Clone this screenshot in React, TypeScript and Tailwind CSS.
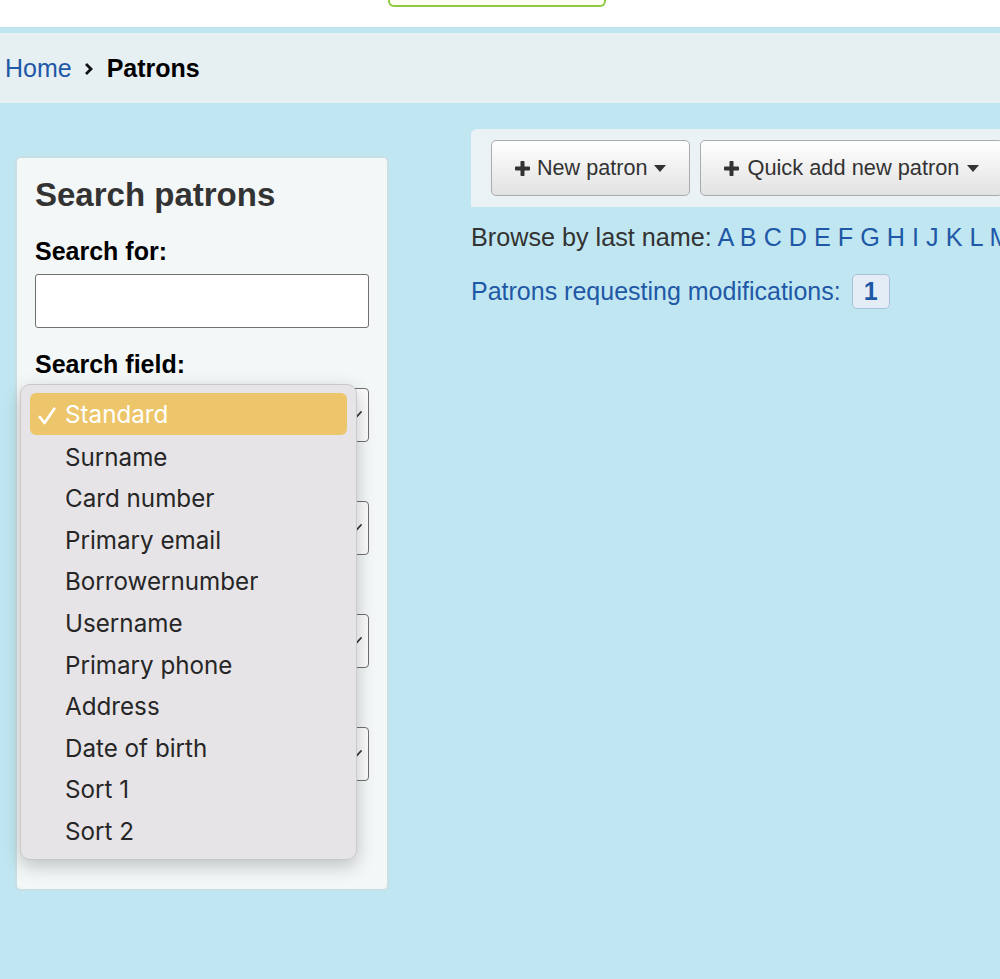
import { FC } from 'react';

const sans = { fontFamily: '"Liberation Sans", Arial, sans-serif' };
const menuFont = { fontFamily: 'Inter, "Noto Sans", sans-serif' };

const letters = 'ABCDEFGHIJKLMNOPQRSTUVWXYZ'.split('');

const options = [
  'Standard',
  'Surname',
  'Card number',
  'Primary email',
  'Borrowernumber',
  'Username',
  'Primary phone',
  'Address',
  'Date of birth',
  'Sort 1',
  'Sort 2',
];

const fields = [
  { label: 'Search field:', value: 'Standard' },
  { label: 'Search type:', value: 'Starts with' },
  { label: 'Patron category:', value: 'Any' },
  { label: 'Library:', value: 'Any' },
];

const Plus: FC = () => (
  <svg width="15" height="15" viewBox="0 0 15 15" className="shrink-0">
    <rect x="5.5" y="0" width="4" height="15" rx="0.8" fill="#333" />
    <rect x="0" y="5.5" width="15" height="4" rx="0.8" fill="#333" />
  </svg>
);

const Caret: FC = () => (
  <svg width="12" height="7" viewBox="0 0 12 7" className="shrink-0">
    <path d="M0 0 L12 0 L6 7 Z" fill="#333" />
  </svg>
);

const Check: FC = () => (
  <svg width="18" height="18" viewBox="0 0 18 18">
    <path d="M1.8 10 L6.5 16 L16.3 1.8" fill="none" stroke="#fff" strokeWidth="2.8" strokeLinecap="round" strokeLinejoin="round" />
  </svg>
);

const SelectBox: FC<{ value: string }> = ({ value }) => (
  <div className="flex h-[54px] items-center justify-between rounded-[4px] border-[1.5px] border-[#707070] bg-[#fbfbfb] pl-3 pr-[6px] text-[22px] text-[#222]">
    <span>{value}</span>
    <svg width="12" height="8" viewBox="0 0 12 8">
      <path d="M1 1 L6 6.5 L11 1" fill="none" stroke="#333" strokeWidth="1.8" strokeLinecap="round" />
    </svg>
  </div>
);

const Dropdown: FC = () => (
  <div
    className="absolute left-[3px] top-[226px] w-[337px] rounded-[10px] border border-[#c9c8cb] bg-[#e6e4e7] px-[9px] pb-[8px] pt-[8px] shadow-[0_6px_18px_rgba(0,0,0,0.22)]"
    style={menuFont}
  >
    {options.map((o, i) => (
      <div
        key={o}
        className={
          i === 0
            ? 'flex h-[42px] items-center rounded-[6px] bg-[#edc56a] pt-[3px] text-[24.2px] text-white'
            : 'flex h-[41.6px] items-center pt-[4px] text-[24.2px] text-[#262626]'
        }
      >
        <span className="flex w-[35px] justify-start pl-[8px]">{i === 0 ? <Check /> : null}</span>
        <span>{o}</span>
      </div>
    ))}
  </div>
);

export default function App() {
  return (
    <div className="min-h-screen overflow-hidden bg-[#c0e7f1]" style={sans}>
      <div className="h-[27px] bg-white">
        <div className="ml-[388px] h-[7px] w-[218px] rounded-b-[6px] border-2 border-t-0 border-[#8fca45] bg-[#fffff2]" />
      </div>
      <div className="mt-[6px] flex h-[70px] items-center bg-[#e6eff2] pl-[5px] pt-[2px] text-[25px]">
        <a className="text-[#1f58a6]">Home</a>
        <svg width="10" height="14" viewBox="0 0 10 14" className="ml-[12px] mr-[13px]">
          <path d="M2 2 L7 7 L2 12" fill="none" stroke="#111" strokeWidth="2.8" />
        </svg>
        <span className="font-bold text-black">Patrons</span>
      </div>

      <div className="flex items-start pl-[15px]">
        <div className="relative mt-[53px] w-[374px] shrink-0 rounded-[6px] border-2 border-[#c8e0e5] bg-[#f3f7f8] px-[18px] pb-[108px] pt-[17px]">
          <h3 className="text-[33px] font-bold leading-[40px] text-[#333]">Search patrons</h3>
          <label className="mb-[8px] mt-[21px] block text-[25px] font-bold leading-[30px] text-black">Search for:</label>
          <div className="h-[54px] rounded-[3px] border-[1.5px] border-[#707070] bg-white" />
          {fields.map((f, i) => (
            <div key={f.label}>
              <label
                className={
                  i === 0
                    ? 'mb-[9px] mt-[21px] block text-[25px] font-bold leading-[30px] text-black'
                    : 'mb-[9px] mt-[20px] block text-[25px] font-bold leading-[30px] text-black'
                }
              >
                {f.label}
              </label>
              <SelectBox value={f.value} />
            </div>
          ))}
          <Dropdown />
        </div>

        <div className="ml-[82px] mt-[26px] w-[800px] shrink-0">
          <div className="flex gap-[10px] rounded-tl-[6px] bg-[#eaf2f5] px-[20px] py-[11px]">
            <button className="flex h-[56px] items-center gap-[7px] rounded-[5px] border border-[#acacac] bg-gradient-to-b from-white to-[#e2e2e2] px-[23px] text-[21.6px] text-[#333]">
              <Plus />
              <span>New patron</span>
              <Caret />
            </button>
            <button className="flex h-[56px] items-center gap-[8px] rounded-[5px] border border-[#acacac] bg-gradient-to-b from-white to-[#e2e2e2] px-[23px] text-[21.8px] text-[#333]">
              <Plus />
              <span>Quick add new patron</span>
              <Caret />
            </button>
          </div>
          <p className="mt-[15px] whitespace-nowrap text-[25.2px] leading-[30px] text-[#333]">
            Browse by last name:{' '}
            {letters.map((l) => (
              <span key={l}>
                <a className="text-[#1f58a6]">{l}</a>{' '}
              </span>
            ))}
          </p>
          <div className="mt-[21px] flex items-center gap-[11px] text-[25px] text-[#1f58a6]">
            <a>Patrons requesting modifications:</a>
            <span className="flex h-[35px] w-[38px] items-center justify-center rounded-[5px] border border-[#a9c2dc] bg-[#e4edf6] font-bold">
              1
            </span>
          </div>
        </div>
      </div>
    </div>
  );
}
